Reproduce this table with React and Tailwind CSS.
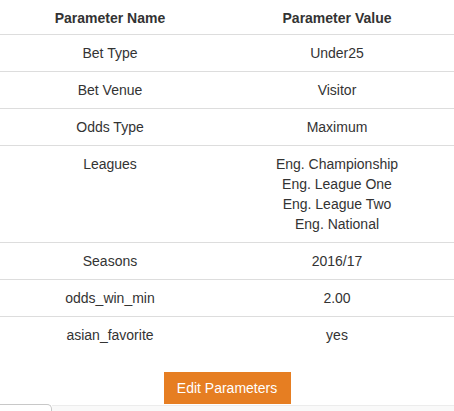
import React from 'react';

const rows = [
  { name: 'Bet Type', value: ['Under25'] },
  { name: 'Bet Venue', value: ['Visitor'] },
  { name: 'Odds Type', value: ['Maximum'] },
  {
    name: 'Leagues',
    value: ['Eng. Championship', 'Eng. League One', 'Eng. League Two', 'Eng. National'],
  },
  { name: 'Seasons', value: ['2016/17'] },
  { name: 'odds_win_min', value: ['2.00'] },
  { name: 'asian_favorite', value: ['yes'] },
];

const App = () => {
  return (
    <div
      className="min-h-[411px] bg-white text-[#333] text-[14px] leading-[20px] flex flex-col"
      style={{ fontFamily: '"Liberation Sans", Arial, sans-serif' }}
    >
      {/* Parameters table */}
      <div className="grid grid-cols-[220px_1fr] w-[454px]">
        <div className="h-[34px] flex items-center justify-center font-bold pt-[1px]">
          Parameter Name
        </div>
        <div className="h-[34px] flex items-center justify-center font-bold pt-[1px]">
          Parameter Value
        </div>
        {rows.map((row, i) => (
          <React.Fragment key={row.name}>
            <div
              className={`border-t border-[#dddddd] py-[8px] text-center ${
                i === 3 ? '' : ''
              }`}
            >
              {row.name}
            </div>
            <div className="border-t border-[#dddddd] py-[8px] text-center">
              {row.value.map((v) => (
                <div key={v}>{v}</div>
              ))}
            </div>
          </React.Fragment>
        ))}
      </div>

      {/* Action */}
      <div className="flex justify-center pt-[19px]">
        <button className="bg-[#e67e22] text-white h-[32px] w-[127px] text-[14px]">
          Edit Parameters
        </button>
      </div>

      {/* Bottom strip */}
      <div className="flex-1 flex items-start">
        <div className="w-[52px] h-[8px] mt-[0px] border-t border-r border-[#c8c8c8] rounded-tr-[5px] bg-white" />
        <div className="flex-1 h-[7px] mt-[1px] border-t border-[#ececec] bg-[#f9f9f9]" />
      </div>
    </div>
  );
};

export default App;
